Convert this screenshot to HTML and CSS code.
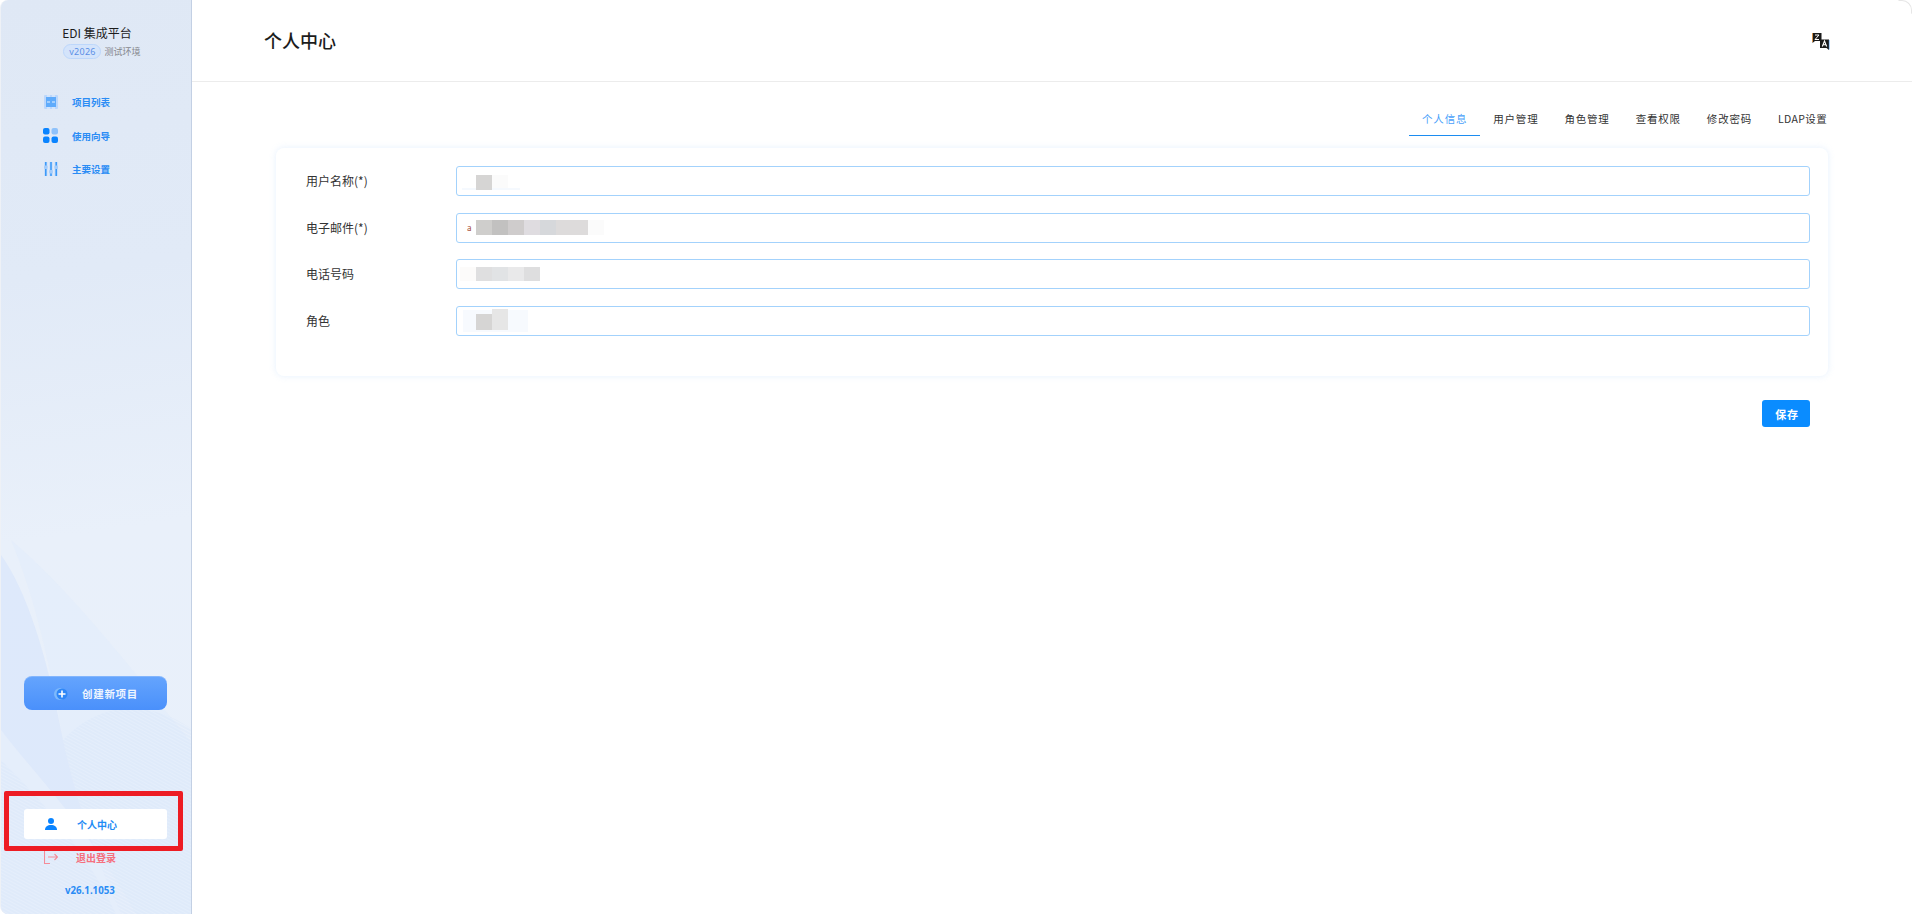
FILE: index.html
```html
<!DOCTYPE html>
<html lang="zh-CN">
<head>
<meta charset="utf-8">
<title>个人中心</title>
<link rel="stylesheet" href="styles.css">
</head>
<body>
<div class="app">
  <aside class="sidebar">
    <svg class="waves" viewBox="0 0 190 914" preserveAspectRatio="none" aria-hidden="true">
      <defs>
        <pattern id="lines" width="3" height="3" patternUnits="userSpaceOnUse" patternTransform="rotate(28)">
          <path d="M0 1h3" stroke="#cfe0f8" stroke-width="1"/>
        </pattern>
      </defs>
      <path d="M10 540C70 590 140 680 192 745V914H120C95 860 75 800 62 740C50 670 35 600 10 540Z" fill="#e3edfb" opacity=".7"/>
      <path d="M0 555C25 590 45 650 62 740C75 800 95 860 120 914H0Z" fill="#d9e6fb" opacity=".7"/>
      <path d="M0 730C30 770 90 830 135 914H0Z" fill="#e8f0fb" opacity=".7"/>
      <path d="M62 740C75 800 95 860 120 914H192V730C150 700 100 700 62 740Z" fill="url(#lines)" opacity=".5"/>
      <path d="M0 760C30 790 80 840 115 914H0Z" fill="url(#lines)" opacity=".5"/>
    </svg>
    <div class="brand">
      <div class="brand-name">EDI 集成平台</div>
      <div class="brand-sub"><span class="version-pill">v2026</span><span class="env">测试环境</span></div>
    </div>
    <nav class="nav">
      <a class="nav-item">
        <svg class="nav-icon" viewBox="0 0 14 14"><rect width="14" height="14" rx="1" fill="#bcd7fb"/><rect x="2" y="2" width="10" height="10" fill="#5fabfb"/><path d="M3 1h3M8 1h3M3 7h3M8 7h3M3 13h3M8 13h3" stroke="#e8f1fd" stroke-width="1"/></svg>
        <span>项目列表</span>
      </a>
      <a class="nav-item">
        <svg class="nav-icon" viewBox="0 0 15 15"><rect width="6.500" height="6.500" rx="2" fill="#0a84ff"/><rect x="8.500" width="6.500" height="6.500" rx="2" fill="#8fc2fb"/><rect y="8.500" width="6.500" height="6.500" rx="2" fill="#0a84ff"/><rect x="8.500" y="8.500" width="6.500" height="6.500" rx="2" fill="#0a84ff"/></svg>
        <span>使用向导</span>
      </a>
      <a class="nav-item">
        <svg class="nav-icon" viewBox="0 0 14 14"><path d="M1.800 0v14M7 0v14M12.200 0v14" stroke="#bcd7fb" stroke-width="3"/><path d="M1.800 0v14M7 0v14M12.200 0v14" stroke="#2f94f8" stroke-width="1.400"/><rect x="0" y="3.500" width="3.600" height="3.500" rx="1" fill="#a3ccfb"/><rect x="5.200" y="8" width="3.600" height="3.500" rx="1" fill="#a3ccfb"/><rect x="10.400" y="3.500" width="3.600" height="3.500" rx="1" fill="#a3ccfb"/></svg>
        <span>主要设置</span>
      </a>
    </nav>
    <div class="spacer"></div>
    <button class="create-btn">
      <svg class="create-icon" viewBox="0 0 14 14"><circle cx="6" cy="7" r="6" fill="#7db9fc"/><circle cx="8" cy="7" r="5.500" fill="#2f87f7"/><path d="M8 3.500v7M4.500 7h7" stroke="#fff" stroke-width="1.600"/></svg>
      <span>创建新项目</span>
    </button>
    <a class="foot-item active">
      <svg class="foot-icon" viewBox="0 0 12 12"><circle cx="6" cy="3" r="3" fill="#0a84ff"/><path d="M0 12c0-3.500 2.500-5 6-5s6 1.500 6 5z" fill="#0a84ff"/></svg>
      <span>个人中心</span>
    </a>
    <a class="foot-item logout">
      <svg class="logout-icon" viewBox="0 0 14 14" fill="none" stroke="#f58b98" stroke-width="1.100"><path d="M6 .500H.500v13H6M4 7h9.500M10.500 4l3 3-3 3"/></svg>
      <span>退出登录</span>
    </a>
    <div class="build">v26.1.1053</div>
    <div class="annotation"></div>
  </aside>
  <main class="main">
    <header class="topbar">
      <h1 class="title">个人中心</h1>
      <svg class="lang-icon" viewBox="0 0 17 17"><path d="M0 0h9v8H2.500L0 10z" fill="#1a1a1a"/><path d="M2.500 2h4l-4 4.500h4" stroke="#fff" stroke-width="1" fill="none"/><path d="M7.500 6.500h9V17l-2.500-2H7.500z" fill="#1a1a1a"/><path d="M9.800 13.500L12 8l2.200 5.500M10.600 11.700h2.800" stroke="#fff" stroke-width="1.100" fill="none"/><path d="M0 0v9" stroke="#e8973c" stroke-width=".8"/><path d="M16.700 7v9.500" stroke="#3c8de8" stroke-width=".6"/></svg>
    </header>
    <div class="content">
      <div class="tabs">
        <a class="tab current">个人信息</a>
        <a class="tab">用户管理</a>
        <a class="tab">角色管理</a>
        <a class="tab">查看权限</a>
        <a class="tab">修改密码</a>
        <a class="tab tab-latin">LDAP设置</a>
      </div>
      <section class="card">
        <div class="row">
          <label class="label">用户名称(*)</label>
          <div class="field">
            <i class="wash wash-name"></i>
            <div class="mosaic mosaic-name"><i class="m m-d4"></i><i class="m m-f9 m-short"></i></div>
          </div>
        </div>
        <div class="row">
          <label class="label">电子邮件(*)</label>
          <div class="field">
            <span class="dot">a</span>
            <div class="mosaic mosaic-mail"><i class="m m-cf"></i><i class="m m-c2"></i><i class="m m-cf2"></i><i class="m m-de"></i><i class="m m-d6"></i><i class="m m-dd"></i><i class="m m-dd"></i><i class="m m-fa"></i></div>
          </div>
        </div>
        <div class="row">
          <label class="label">电话号码</label>
          <div class="field">
            <i class="wash wash-phone"></i>
            <div class="mosaic mosaic-phone"><i class="m m-df"></i><i class="m m-e1"></i><i class="m m-e9"></i><i class="m m-de2"></i></div>
          </div>
        </div>
        <div class="row">
          <label class="label">角色</label>
          <div class="field">
            <i class="wash wash-role"></i>
            <div class="mosaic mosaic-role"><i class="m m-d4"></i><i class="m m-e6 m-tall"></i></div>
          </div>
        </div>
      </section>
      <div class="actions"><button class="save">保存</button></div>
    </div>
  </main>
</div>
</body>
</html>
```
FILE: styles.css
```css
* { box-sizing: border-box; }
html, body { margin: 0; height: 100%; overflow: hidden; background: #fff; }
body { font-family: "Noto Sans CJK SC", "Noto Sans", sans-serif; color: #222; }
a { display: flex; text-decoration: none; }
.app { display: flex; width: 1912px; height: 914px; }

.sidebar {
  position: relative;
  display: flex;
  flex-direction: column;
  flex: 0 0 192px;
  height: 914px;
  padding-top: 24px;
  background: linear-gradient(172deg, #dfe8f5 0%, #e1eaf7 30%, #e9f0fa 58%, #e8f0fb 100%);
  border-right: 1px solid #c3d0e4;
  border-left: 1px solid #eef1f6;
  border-radius: 8px 0 0 8px;
  overflow: hidden;
}
.waves { position: absolute; inset: 0; width: 100%; height: 100%; }
.brand, .nav, .spacer, .create-btn, .foot-item, .build { position: relative; }
.brand { display: flex; flex-direction: column; align-items: center; padding-left: 2px; }
.brand-name { font-size: 12px; line-height: 18px; color: #1c1c1c; }
.brand-sub { display: flex; align-items: center; margin-top: 2px; margin-left: 10px; }
.version-pill {
  width: 38px;
  height: 15px;
  line-height: 13px;
  text-align: center;
  font-size: 9px;
  border: 1px solid #bdd7fb;
  border-radius: 8px;
  background: #d4e4fb;
  color: #5b8fe6;
  font-family: "Noto Sans", sans-serif;
  letter-spacing: .3px;
}
.env { margin-left: 3px; font-size: 9px; line-height: 15px; color: #85878c; }

.nav { display: flex; flex-direction: column; margin-top: 33px; gap: 13.500px; padding-left: 43px; }
.nav-item { align-items: center; height: 20px; font-size: 9.500px; font-weight: 700; color: #2a8cf5; }
.nav-icon { width: 14px; height: 14px; margin-right: 14px; flex: none; }
.nav-item:nth-child(2) .nav-icon { width: 15px; height: 15px; margin-left: -1px; }

.spacer { flex: 1; }
.create-btn {
  display: flex;
  align-items: center;
  margin: 0 0 0 23px;
  width: 143px;
  height: 34px;
  padding: 0 0 0 30px;
  border: 0;
  border-top: 1px solid #82b5fd;
  border-radius: 8px;
  background: linear-gradient(180deg, #64a4fd, #4a90fb);
  color: #eef5ff;
  font: 700 10.500px "Noto Sans CJK SC", sans-serif;
  letter-spacing: .7px;
}
.create-icon { width: 14px; height: 14px; margin-right: 14px; flex: none; }

.foot-item { align-items: center; margin-left: 23px; width: 143px; height: 30px; padding-left: 21px; font-size: 10px; font-weight: 700; }
.foot-item.active { margin-top: 99px; background: #fff; border-radius: 3px; color: #1f8cf5; }
.foot-item.logout { margin-top: 3px; color: #f5707e; }
.foot-icon { width: 12px; height: 12px; margin-right: 20px; flex: none; }
.logout-icon { width: 14px; height: 14px; margin-right: 18px; flex: none; margin-left: -1px; }
.build { margin-top: 12px; margin-bottom: 16px; padding-left: 64px; font: 700 9.700px/14px "Noto Sans", sans-serif; color: #2a8cf5; }
.annotation {
  position: absolute;
  left: 3px;
  top: 791px;
  width: 179px;
  height: 60px;
  border: 5px solid #ed1c24;
  border-radius: 2px;
}

.main { flex: 1; display: flex; flex-direction: column; min-width: 0; }
.topbar {
  position: relative;
  display: flex;
  align-items: center;
  justify-content: space-between;
  height: 82px;
  padding: 0 82px 2px 72px;
  border-bottom: 1px solid #ececec;
}
.topbar::after {
  content: "";
  position: absolute;
  top: 0;
  right: 0;
  width: 12px;
  height: 12px;
  border-top: 1px solid #e6e6e6;
  border-right: 1px solid #e6e6e6;
  border-left: 1px solid transparent;
  border-bottom: 1px solid transparent;
  border-radius: 0 10px 0 0;
}
.title { margin: 0; font-size: 18px; font-weight: 500; color: #1c1c1c; line-height: 26px; }
.lang-icon { width: 18px; height: 17px; margin-top: 3px; }

.content { display: flex; flex-direction: column; padding: 24px 84px 0; }
.tabs { display: flex; justify-content: flex-end; height: 30px; margin-right: -12px; }
.tab {
  align-items: flex-start;
  justify-content: center;
  padding: 5px 13px 0;
  font-size: 10.500px;
  line-height: 16px;
  letter-spacing: .8px;
  color: #333;
}
.tab.tab-latin { letter-spacing: .35px; }
.tab.current { color: #4a9ffa; border-bottom: 1px solid #1c8cf0; }
.card {
  display: flex;
  flex-direction: column;
  gap: 16.670px;
  height: 228px;
  margin-top: 12px;
  padding: 18px 18px 0 30px;
  border-radius: 8px;
  background: #fff;
  box-shadow: 0 0 6px rgba(170, 205, 250, .3);
}
.row { display: flex; align-items: center; height: 30px; font-size: 12px; }
.label { flex: 0 0 150px; line-height: 18px; color: #333; }
.field {
  position: relative;
  flex: 1;
  display: flex;
  align-items: flex-start;
  height: 30px;
  padding-left: 19px;
  border: 1px solid #a3d2fc;
  border-radius: 3px;
}
.mosaic { position: relative; display: flex; align-items: flex-end; height: 15px; }
.mosaic-name { margin-top: 8px; }
.mosaic-mail { margin-top: 6px; }
.mosaic-phone { margin-top: 7px; height: 14px; }
.mosaic-role { margin-top: 2px; height: 21px; }
.m { display: block; width: 16px; height: 100%; flex: none; }
.mosaic-role .m { height: 16px; }
.mosaic-role .m-tall { height: 21px; }
.mosaic-name .m-short { height: 13px; align-self: flex-start; }
.wash { position: absolute; display: block; }
.wash-name { left: 5px; top: 21px; width: 58px; height: 2px; background: #f5f9fe; }
.wash-phone { left: 3px; top: 7px; width: 16px; height: 14px; background: #fcfbfa; }
.wash-role { left: 6px; top: 3px; width: 65px; height: 22px; background: #f7fafe; }
.m-d4 { background: #d6d5d4; }
.m-f9 { background: #fbfbfb; }
.m-cf { background: #cfcecc; }
.m-c2 { background: #c2c1c0; }
.m-cf2 { background: #cfcccc; }
.m-de { background: #dfdce0; }
.m-d6 { background: #d6d8db; }
.m-dd { background: #dddbdb; }
.m-fa { background: #fbfbfb; }
.m-df { background: #dfdfe0; }
.m-e1 { background: #e1e3e5; }
.m-e9 { background: #e9e9ea; }
.m-de2 { background: #dededf; }
.m-e6 { background: #e6e6e6; }
.dot { position: absolute; left: 10px; top: 8px; font-size: 8px; line-height: 12px; color: #a3452e; }
.actions { display: flex; justify-content: flex-end; margin-top: 24px; padding-right: 18px; }
.save {
  width: 48px;
  height: 27px;
  padding: 0 0 0 2px;
  border: 0;
  border-radius: 3px;
  background: #0a8cff;
  color: #fff;
  font: 700 11px "Noto Sans CJK SC", sans-serif;
  letter-spacing: .8px;
}
```
